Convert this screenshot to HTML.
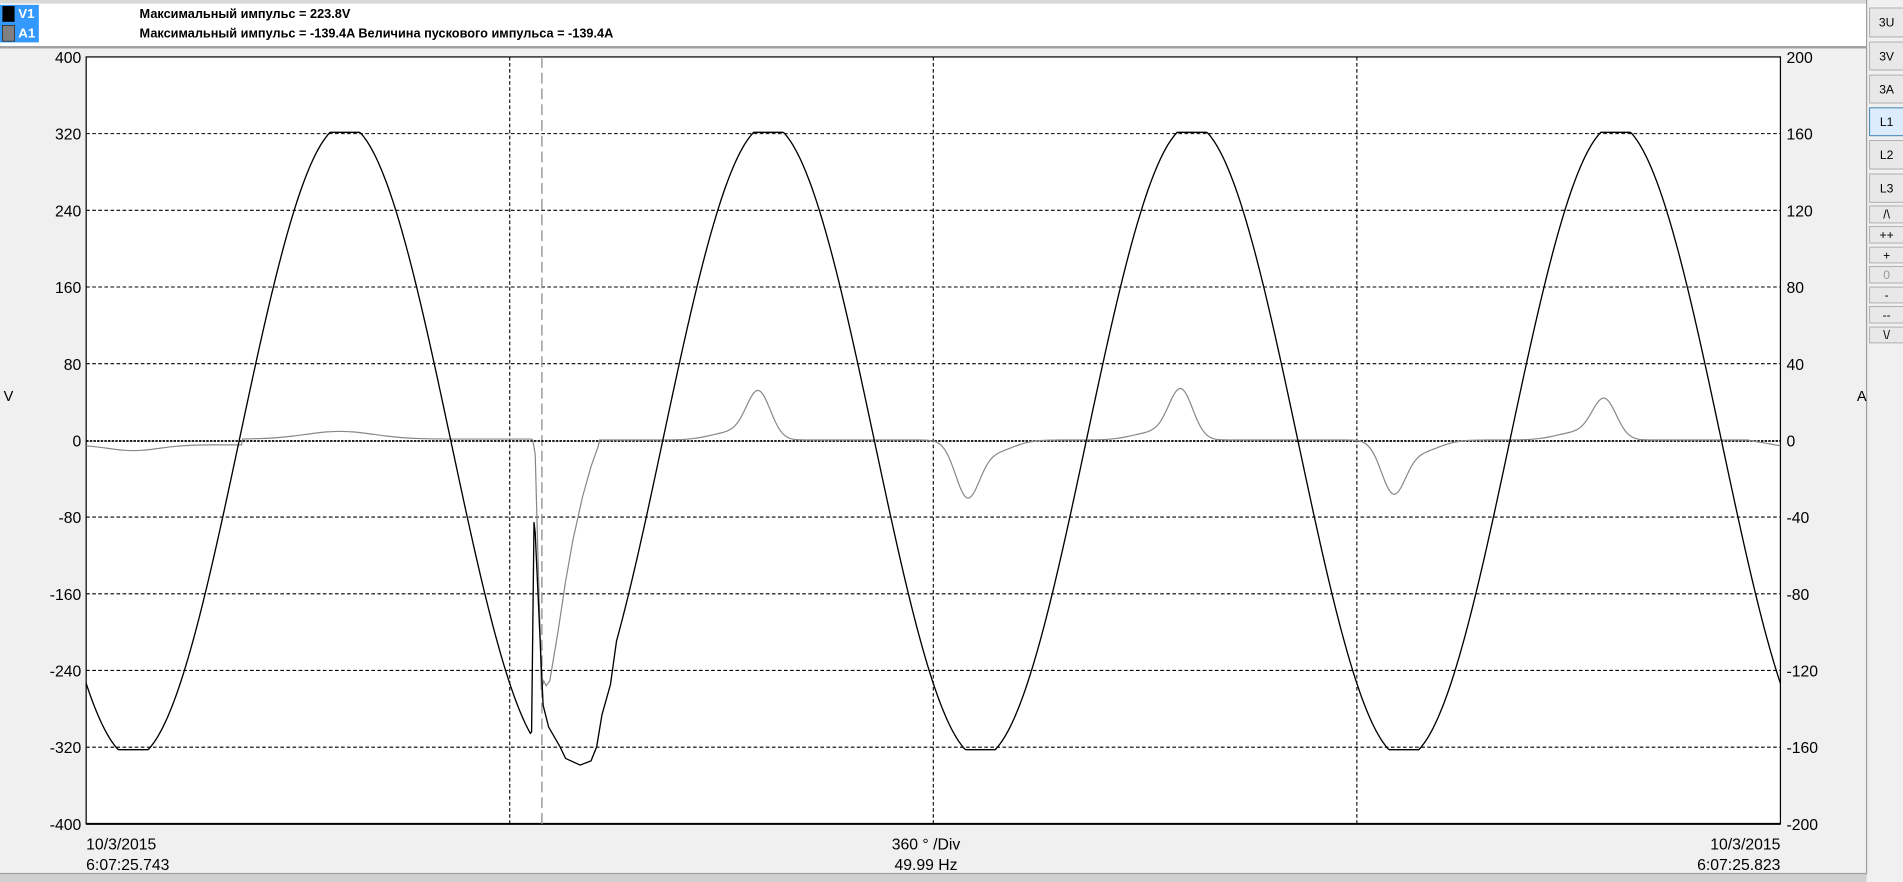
<!DOCTYPE html>
<html><head><meta charset="utf-8"><style>
html,body{margin:0;padding:0;background:#f0f0f0;overflow:hidden}
svg{display:block}
text{font-family:"Liberation Sans Narrow","Liberation Sans","DejaVu Sans",sans-serif}
</style></head><body>
<svg id="s" width="1903" height="882" viewBox="0 0 1568 728" preserveAspectRatio="none" xmlns="http://www.w3.org/2000/svg">
<rect width="1568" height="728" fill="#f0f0f0"/>
<rect x="0" y="0" width="1538" height="3" fill="#d8d8d8"/>
<rect x="0" y="3" width="1538" height="35" fill="#fff"/>
<rect x="0" y="38" width="1538" height="2" fill="#a0a0a0"/>
<line x1="1538" y1="0" x2="1538" y2="722" stroke="#a0a0a0"/>
<rect x="0" y="4" width="32" height="31" fill="#3399ff"/>
<rect x="2" y="5" width="10" height="13" fill="#000"/>
<rect x="2" y="21" width="10" height="13" fill="#808080" stroke="#333" stroke-width="0.7"/>
<text x="15" y="15" font-size="11" font-weight="bold" fill="#fff">V1</text>
<text x="15" y="31" font-size="11" font-weight="bold" fill="#fff">A1</text>
<text x="115" y="15" font-size="10.5" font-weight="bold">Максимальный импульс = 223.8V</text>
<text x="115" y="31" font-size="10.5" font-weight="bold">Максимальный импульс = -139.4A  Величина пускового импульса = -139.4A</text>
<rect x="71" y="47" width="1396" height="633" fill="#fff" stroke="#000" stroke-width="1"/>
<line x1="71" y1="680" x2="1467" y2="680" stroke="#000" stroke-width="1.6"/>
<g id="grid" stroke="#000" stroke-width="0.9" stroke-dasharray="3,2"></g>
<line x1="446.5" y1="47" x2="446.5" y2="680" stroke="#999" stroke-width="1.2" stroke-dasharray="9,4"/>
<line x1="71" y1="364" x2="1467" y2="364" stroke="#000" stroke-width="1.5" stroke-dasharray="2,1"/>
<path id="cur" fill="none" stroke="#888" stroke-width="1"/>
<path id="vol" fill="none" stroke="#000" stroke-width="1.1"/>
<g id="lab" font-size="13"></g>
<text x="3" y="331" font-size="12">V</text>
<text x="1530" y="331" font-size="12">A</text>
<text x="71" y="701" font-size="13">10/3/2015</text>
<text x="71" y="718" font-size="13">6:07:25.743</text>
<text x="763" y="701" font-size="13" text-anchor="middle">360 ° /Div</text>
<text x="763" y="718" font-size="13" text-anchor="middle">49.99 Hz</text>
<text x="1467" y="701" font-size="13" text-anchor="end">10/3/2015</text>
<text x="1467" y="718" font-size="13" text-anchor="end">6:07:25.823</text>
<rect x="0" y="721" width="1538" height="7" fill="#d0d0d0"/>
<line x1="0" y1="721" x2="1538" y2="721" stroke="#a0a0a0"/>
<g id="btns" font-size="10"></g>
</svg>
<script>
(function(){
var NS="http://www.w3.org/2000/svg";
function el(t,a,p,txt){var e=document.createElementNS(NS,t);for(var k in a)e.setAttribute(k,a[k]);if(txt!=null)e.textContent=txt;document.getElementById(p).appendChild(e);return e;}
var T=47,B=680,L=71,R=1467;
function yv(v){return 364-v*633/800;}
function ya(a){return 364-a*633/400;}
for(var i=1;i<10;i++){if(i==5)continue;var y=T+i*63.3;el("line",{x1:L,y1:y,x2:R,y2:y},"grid");}
[420,769,1118].forEach(function(x){el("line",{x1:x,y1:T,x2:x,y2:B},"grid");});
for(var i=0;i<=10;i++){var y=T+i*63.3+5;el("text",{x:67,y:y,"text-anchor":"end"},"lab",String(400-i*80));el("text",{x:1472,y:y},"lab",String(200-i*40));}
function nat(x){var v=330*Math.sin(2*Math.PI*(x-197)/349);return Math.max(-322,Math.min(322,v));}
var d="";
for(var x=L;x<=R;x+=1){
 if(x>437&&x<508){continue;}
 d+=(d?"L":"M")+x+","+yv(nat(x)).toFixed(1);
 if(x==437){d+="L438,604L440,431L441,440L447.5,582L452,600L461.5,616.5L466,626L478,631.5L487,628L491.6,616.5L496,590L503,565";}
}
document.getElementById("vol").setAttribute("d",d);
function bump(x,c,h,w){var t=(x-c)/w;return h*Math.exp(-t*t);}
function cur(x){
 var base;
 if(x<200) base=-2-3*Math.exp(-Math.pow((x-110)/30,2));
 else if(x<439) base=1+4*Math.exp(-Math.pow((x-280)/40,2));
 else base=0.5;
 var p=[[625,24,14],[973,25,14],[1322,20,14]];
 var n=[[797,-28,14],[1148,-26,14]];
 var v=base;
 p.forEach(function(q){v+=bump(x,q[0],q[1],q[2])+bump(x,q[0]-22,4,25);});
 n.forEach(function(q){v+=bump(x,q[0],q[1],q[2])+bump(x,q[0]+22,-6,22);});
 if(x>1440)v-=(x-1440)/27*3;
 return v;
}
var c="";
for(var x=L;x<=R;x+=1){
 if(x>439&&x<494)continue;
 c+=(c?"L":"M")+x+","+ya(cur(x)).toFixed(1);
 if(x==439){c+="L441,375L443,450L445,520L446,569.6L448,562L450,566L453,562L460,520L466,480L472,446L480,410L487,385L493,368";}
}
document.getElementById("cur").setAttribute("d",c);
var b=[["3U",6.6,30.5],["3V",34.7,57.8],["3A",62,85],["L1",89,112],["L2",116,139.5],["L3",143.6,167],["/\\",170,184],["++",187,200.6],["+",204,217],["0",220,233.6],["-",237,250],["--",253,266.6],["\\/",270,283]];
b.forEach(function(q){var act=q[0]=="L1";
 el("rect",{x:1540.5,y:q[1],width:28,height:q[2]-q[1],fill:act?"#dcecfc":"#e8e8e8",stroke:act?"#3c7fb1":"#adadad","stroke-width":0.8},"btns");
 el("text",{x:1554.5,y:(q[1]+q[2])/2+3.5,"text-anchor":"middle",fill:q[0]=="0"?"#999":"#000"},"btns",q[0]);});
})();
</script>
</body></html>
